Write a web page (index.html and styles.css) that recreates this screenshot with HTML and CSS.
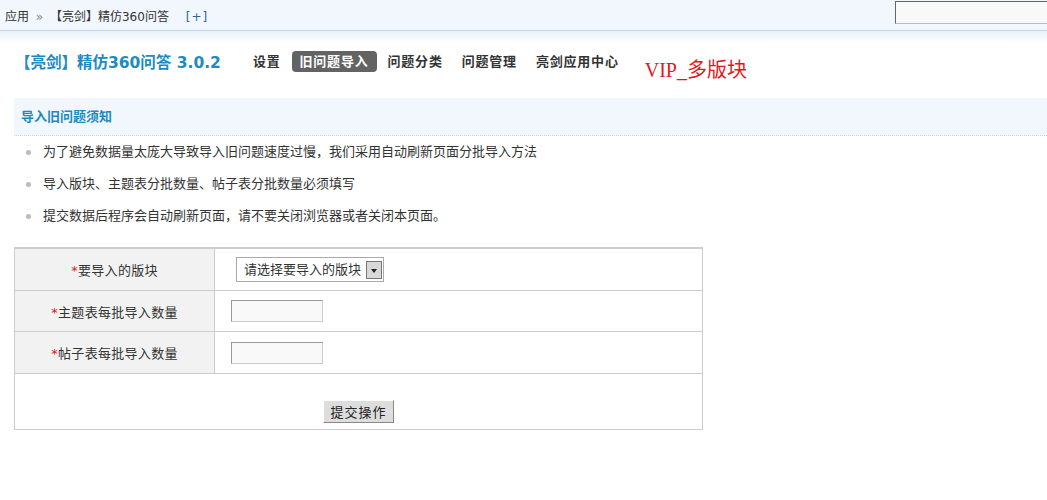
FILE: index.html
```html
<!DOCTYPE html>
<html lang="zh-CN">
  <head>
    <meta charset="UTF-8" />
    <title>导入旧问题</title>
    <link rel="stylesheet" href="styles.css">
  </head>
  <body>
    <div class="topbar">
      <span class="crumb">应用 <span class="sep">»</span> 【亮剑】精仿360问答 <a class="add" href="#">[+]</a></span>
      <input type="text" class="search" />
    </div>

    <div class="header">
      <h1 class="title">【亮剑】精仿360问答 3.0.2</h1>
      <ul class="nav">
        <li><a href="#">设置</a></li>
        <li class="active"><a href="#">旧问题导入</a></li>
        <li><a href="#">问题分类</a></li>
        <li><a href="#">问题管理</a></li>
        <li><a href="#">亮剑应用中心</a></li>
      </ul>
      <span class="vip">VIP_多版块</span>
    </div>

    <h2 class="notice-title">导入旧问题须知</h2>
    <ul class="notice">
      <li>为了避免数据量太庞大导致导入旧问题速度过慢，我们采用自动刷新页面分批导入方法</li>
      <li>导入版块、主题表分批数量、帖子表分批数量必须填写</li>
      <li>提交数据后程序会自动刷新页面，请不要关闭浏览器或者关闭本页面。</li>
    </ul>

    <form class="import-form" onsubmit="return false">
      <table class="form-table">
        <tr class="tall">
          <th><span class="req">*</span>要导入的版块</th>
          <td>
            <span class="select-box">
              <select>
                <option>请选择要导入的版块</option>
              </select>
              <span class="arrow"></span>
            </span>
          </td>
        </tr>
        <tr>
          <th><span class="req">*</span>主题表每批导入数量</th>
          <td><input type="text" class="num" /></td>
        </tr>
        <tr class="tall">
          <th><span class="req">*</span>帖子表每批导入数量</th>
          <td><input type="text" class="num" /></td>
        </tr>
        <tr>
          <td colspan="2" class="submit-row">
            <button type="submit">提交操作</button>
          </td>
        </tr>
      </table>
    </form>
  </body>
</html>
```

FILE: styles.css
```css
body {
  margin: 0;
  font-family: "DejaVu Sans", "Noto Sans CJK SC", sans-serif;
  font-size: 13px;
  color: #333;
  background: #fff;
}
a {
  text-decoration: none;
  color: inherit;
}
.topbar {
  display: flex;
  align-items: center;
  height: 30px;
  padding-left: 5px;
  background: #f1f7fc;
  border-bottom: 1px solid #c2d5e3;
  overflow: hidden;
  font-size: 12px;
}
.sep {
  color: #888;
  margin: 0 3px;
}
.add {
  color: #369;
  margin-left: 13px;
  letter-spacing: 1px;
}
.search {
  margin: -6px -14px 0 auto;
  width: 160px;
  height: 19px;
  padding: 1px 2px;
  border: 1px solid #bbb;
  border-top-color: #666;
  border-left-color: #666;
  background: #f9f9f9;
}
.header {
  display: flex;
  align-items: center;
  height: 60px;
  padding-left: 15px;
  background: linear-gradient(#e9f2f9, #fff 12px);
}
.title {
  margin: 0;
  font-size: 15.5px;
  font-weight: bold;
  color: #1c8ac3;
}
.nav {
  display: flex;
  gap: 3px;
  margin: 0 0 0 24px;
  padding: 0;
  list-style: none;
}
.nav a {
  display: block;
  padding: 0 8px;
  line-height: 21px;
  font-weight: bold;
  letter-spacing: 0.8px;
  border-radius: 4px;
}
.nav .active a {
  background: #636363;
  color: #fff;
}
.vip {
  margin: 14px 0 0 18px;
  font-family: "Liberation Serif", "Noto Sans CJK SC", serif;
  font-size: 20px;
  color: #e0191d;
}
.notice-title {
  margin: 7px 0 0 14px;
  padding-left: 7px;
  height: 37px;
  line-height: 38px;
  font-size: 13px;
  color: #1c8ac3;
  background: #f1f7fc;
  border-bottom: 1px dotted #c5d8e6;
}
.notice {
  margin: 0;
  padding: 0 0 0 43px;
  list-style: none;
}
.notice li {
  position: relative;
  line-height: 32px;
}
.notice li::before {
  content: "";
  position: absolute;
  left: -17px;
  top: 14px;
  width: 5px;
  height: 5px;
  border-radius: 50%;
  background: #bbb;
}
.import-form {
  margin: 15px 0 0 14px;
}
.form-table {
  width: 689px;
  border-collapse: collapse;
  border-top: 2px solid #ccc;
}
.form-table th,
.form-table td {
  height: 40px;
  padding: 0;
  border: 1px solid #ccc;
  letter-spacing: 0.3px;
}
.form-table .tall th,
.form-table .tall td {
  height: 41px;
}
.form-table th {
  width: 199px;
  font-weight: normal;
  background: #f2f2f2;
  text-align: center;
}
.form-table td {
  padding-left: 16px;
}
.req {
  color: #e0191d;
}
.select-box {
  display: inline-flex;
  align-items: center;
  margin-left: 5px;
  height: 23px;
  padding: 0 1px 0 0;
  border: 1px solid #aaa;
  background: #fff;
  vertical-align: middle;
}
.select-box select {
  appearance: none;
  border: 0;
  background: transparent;
  padding: 0 4px 0 7px;
  font: inherit;
  font-size: 13px;
  color: #333;
  letter-spacing: 0;
}
.arrow {
  position: relative;
  width: 14px;
  height: 16px;
  border: 1px solid #777;
  background: #d8d8d8;
}
.arrow::after {
  content: "";
  position: absolute;
  left: 4px;
  top: 7px;
  border: 3px solid transparent;
  border-top: 4px solid #222;
}
.num {
  width: 86px;
  height: 18px;
  padding: 1px 2px;
  border: 1px solid #ccc;
  border-top-color: #999;
  border-left-color: #999;
  background: #f9f9f9;
  vertical-align: middle;
}
.form-table .submit-row {
  height: 56px;
  padding: 26px 0 6px;
  text-align: center;
  box-sizing: border-box;
}
.submit-row button {
  width: 71px;
  height: 23px;
  padding: 0;
  font: inherit;
  font-size: 13px;
  letter-spacing: 1px;
  color: #222;
  background: #ddd;
  border: 1px solid #888;
  border-top-color: #fff;
  border-left-color: #fff;
}
```
